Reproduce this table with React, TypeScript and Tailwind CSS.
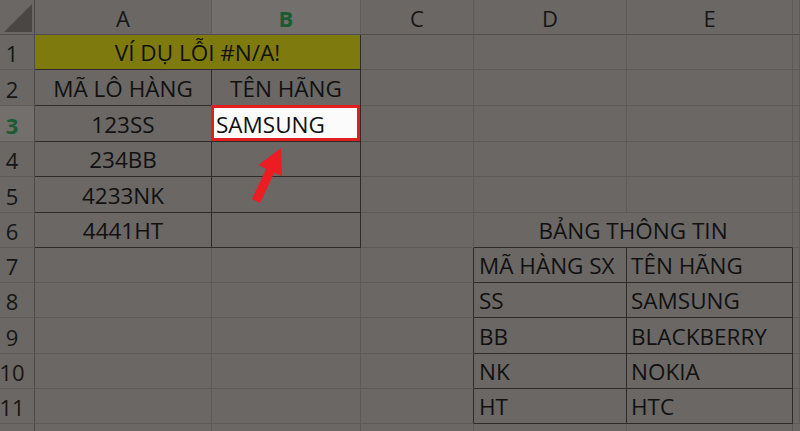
import React from 'react'

type CellProps = {
  children?: React.ReactNode
  className?: string
}

const GRID = 'border-[#5e5a58]'
const DARK = 'border-[#2e2b2a]'

function Cell({ children, className = '' }: CellProps) {
  return (
    <div
      className={`flex items-end pb-[4px] overflow-visible whitespace-nowrap border-r border-b text-[22.5px] leading-[24px] text-[#111] ${className}`}
    >
      {children}
    </div>
  )
}

function RowHead({ n, active }: { n: number; active?: boolean }) {
  return (
    <div
      className={`flex items-end justify-center pr-[10px] pb-[4px] border-r border-b border-r-[#4f4b49] border-b-[#5e5a58] text-[22px] leading-[24px] ${
        active ? 'bg-[#736f6c] font-bold text-[#1c5a32]' : 'text-[#161616]'
      }`}
    >
      {n}
    </div>
  )
}

function ColHead({ label, active }: { label: string; active?: boolean }) {
  return (
    <div
      className={`flex items-center justify-center pt-[3px] border-r border-b border-r-[#5f5b59] border-b-[#524e4c] text-[22px] ${
        active ? 'bg-[#736f6c] font-bold text-[#1c5a32]' : 'text-[#161616]'
      }`}
    >
      {label}
    </div>
  )
}

function Empty({ className = '' }: { className?: string }) {
  return <Cell className={`${GRID} ${className}`} />
}

const leftRows = [
  { n: 4, code: '234BB' },
  { n: 5, code: '4233NK' },
  { n: 6, code: '4441HT' },
]

const info = [
  ['MÃ HÀNG SX', 'TÊN HÃNG'],
  ['SS', 'SAMSUNG'],
  ['BB', 'BLACKBERRY'],
  ['NK', 'NOKIA'],
  ['HT', 'HTC'],
]

export default function App() {
  return (
    <div
      className="relative w-[800px] h-[431px] overflow-hidden bg-[#6b6765]"
      style={{ fontFamily: '"Open Sans", "Noto Sans", sans-serif' }}
    >
      <div className="grid grid-cols-[35px_177px_149px_113px_153px_166px_1fr] grid-rows-[35px_35px_36px_36px_35px_36px_35px_35px_35px_36px_35px_35px_20px]">
        {/* header */}
        <div className="border-r border-b border-r-[#4f4b49] border-b-[#524e4c] flex items-end justify-end pr-[2px] pb-[2px]">
          <svg width="28" height="28" viewBox="0 0 28 28">
            <polygon points="0,28 28,28 28,0" fill="#4a4644" />
          </svg>
        </div>
        <ColHead label="A" />
        <ColHead label="B" active />
        <ColHead label="C" />
        <ColHead label="D" />
        <ColHead label="E" />
        <ColHead label="" />

        {/* row 1 */}
        <RowHead n={1} />
        <Cell className={`col-span-2 justify-center bg-[#7e7a0d] ${DARK}`}>VÍ DỤ LỖI #N/A!</Cell>
        <Empty />
        <Empty />
        <Empty />
        <Empty />

        {/* row 2 */}
        <RowHead n={2} />
        <Cell className={`justify-center ${DARK}`}>MÃ LÔ HÀNG</Cell>
        <Cell className={`justify-center ${DARK}`}>TÊN HÃNG</Cell>
        <Empty />
        <Empty />
        <Empty />
        <Empty />

        {/* row 3 */}
        <RowHead n={3} active />
        <Cell className={`justify-center ${DARK}`}>123SS</Cell>
        <Cell className={`bg-[#fbfbfb] ${DARK} shadow-[inset_0_0_0_3px_#e11f1f] -mt-px -ml-px pl-[5px]`}>
          SAMSUNG
        </Cell>
        <Empty />
        <Empty />
        <Empty />
        <Empty />

        {/* rows 4-6 */}
        {leftRows.map((r) => (
          <React.Fragment key={r.n}>
            <RowHead n={r.n} />
            <Cell className={`justify-center ${DARK}`}>{r.code}</Cell>
            <Cell className={DARK} />
            <Empty />
            {r.n === 6 ? (
              <Cell className={`col-span-2 justify-center ${GRID} border-b-[#2e2b2a] border-r-[#5e5a58]`}>
                BẢNG THÔNG TIN
              </Cell>
            ) : (
              <>
                <Empty />
                <Empty />
              </>
            )}
            <Empty />
          </React.Fragment>
        ))}

        {/* rows 7-11 */}
        {info.map(([code, name], i) => (
          <React.Fragment key={code}>
            <RowHead n={7 + i} />
            <Empty />
            <Empty />
            <Cell className={`${GRID} border-r-[#2e2b2a]`} />
            <Cell className={`pl-[5px] ${DARK}`}>{code}</Cell>
            <Cell className={`pl-[4px] ${DARK}`}>{name}</Cell>
            <Empty />
          </React.Fragment>
        ))}

        {/* row 12 (partial) */}
        <div className="border-r border-r-[#4f4b49]" />
        <div className="border-r border-[#5e5a58]" />
        <div className="border-r border-[#5e5a58]" />
        <div className="border-r border-[#5e5a58]" />
        <div className="border-r border-[#5e5a58]" />
        <div className="border-r border-[#5e5a58]" />
        <div />
      </div>

      {/* red arrow annotation */}
      <svg className="absolute left-0 top-0 pointer-events-none" width="800" height="431">
        <polygon
          points="251.9,199.1 266.2,168.7 258.5,165 281,148 282.1,176.2 274.4,172.5 260.1,202.9"
          fill="#ec1c22"
        />
      </svg>
    </div>
  )
}
